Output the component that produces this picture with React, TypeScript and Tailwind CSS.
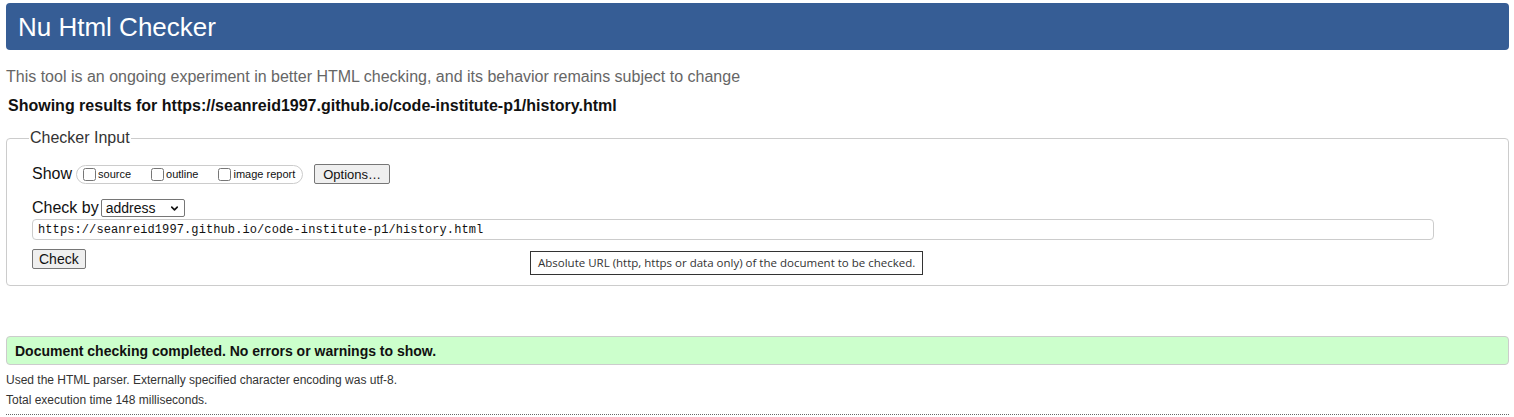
import { ChevronDown } from "lucide-react";

export default function App() {
  const opts = [
    { id: "source", label: "source" },
    { id: "outline", label: "outline" },
    { id: "image", label: "image report" },
  ];

  return (
    <div className="min-h-screen bg-white pl-[6px] pr-[5px] font-['Liberation_Sans',Arial,sans-serif] text-[#111]">
      <div className="mt-[3px] flex h-[47px] items-center rounded-[4px] bg-[#365d95] pl-[12px]">
        <h1 className="text-[26px] leading-none text-white">Nu Html Checker</h1>
      </div>

      <p className="mt-[18px] text-[16px] leading-[18px] text-[#666]">
        This tool is an ongoing experiment in better HTML checking, and its behavior remains subject to change
      </p>
      <p className="mt-[11px] pl-[2px] text-[16px] font-bold leading-[18px]">
        Showing results for https://seanreid1997.github.io/code-institute-p1/history.html
      </p>

      <fieldset className="relative mt-[14px] rounded-[4px] border border-[#ccc] px-[25px] pb-[16px]">
        <legend className="-ml-[3px] px-[1px] text-[16px] leading-[18px] text-[#333]">Checker Input</legend>

        <div className="mt-[17px] flex h-[20px] items-center">
          <span className="text-[16px] leading-none">Show</span>
          <div className="ml-[4px] flex h-[19px] items-center gap-[20px] rounded-full border border-[#ccc] pl-[6px] pr-[7px]">
            {opts.map((o) => (
              <label key={o.id} className="flex items-center gap-[2px]">
                <input type="checkbox" className="h-[13px] w-[13px]" />
                <span className="text-[11px] leading-none">{o.label}</span>
              </label>
            ))}
          </div>
          <button className="ml-[11px] h-[20px] rounded-[2px] border border-[#767676] bg-[#efefef] px-[8px] text-[13px] leading-none">
            Options…
          </button>
        </div>

        <div className="mt-[14px] flex h-[19px] items-center">
          <span className="text-[16px] leading-none">Check by</span>
          <div className="relative ml-[2px] flex h-[18px] w-[84px] items-center rounded-[2px] border border-[#767676] pl-[4px]">
            <span className="text-[14px] leading-none">address</span>
            <ChevronDown className="absolute right-[4px] top-[3px] h-[11px] w-[11px]" strokeWidth={3.5} />
          </div>
        </div>

        <div className="mt-[2px] flex h-[21px] w-[1402px] items-center rounded-[4px] border border-[#ccc] pl-[5px]">
          <span className="font-['Liberation_Mono','DejaVu_Sans_Mono',monospace] text-[12px] leading-none tracking-[0.1px]">
            https://seanreid1997.github.io/code-institute-p1/history.html
          </span>
        </div>

        <div className="mt-[9px] flex">
          <button className="h-[20px] rounded-[2px] border border-[#767676] bg-[#efefef] px-[6px] text-[14px] leading-none">
            Check
          </button>
        </div>

        <div className="absolute left-[523px] top-[104px] flex h-[24px] items-center border border-[#333] bg-white px-[7px] font-['Open_Sans',sans-serif] text-[11.5px] leading-none text-[#333]">
          Absolute URL (http, https or data only) of the document to be checked.
        </div>
      </fieldset>

      <div className="mt-[50px] flex h-[29px] items-center rounded-[4px] border border-[#ccc] bg-[#ccffcc] pl-[8px]">
        <span className="text-[14px] font-bold leading-none">Document checking completed. No errors or warnings to show.</span>
      </div>

      <p className="mt-[8px] text-[12px] leading-[14px] text-[#333]">
        Used the HTML parser. Externally specified character encoding was utf-8.
      </p>
      <p className="mt-[6px] text-[12px] leading-[14px] text-[#333]">Total execution time 148 milliseconds.</p>
      <div className="mt-[7px] border-t border-dotted border-[#666]" />
    </div>
  );
}
